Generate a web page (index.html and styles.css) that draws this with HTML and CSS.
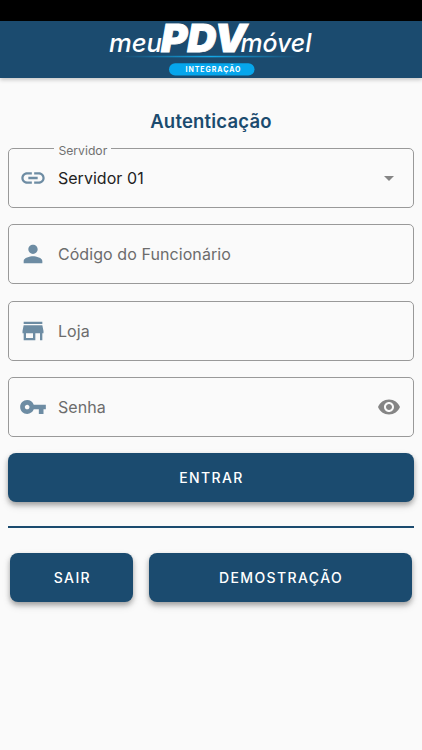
FILE: index.html
```html
<!DOCTYPE html>
<html lang="pt-BR">
<head>
<meta charset="utf-8">
<meta name="viewport" content="width=device-width, initial-scale=1">
<title>meuPDVmóvel</title>
<link rel="stylesheet" href="styles.css">
</head>
<body>
<div class="status-bar"></div>
<header class="app-bar">
  <svg class="logo" width="240" height="57" viewBox="90 21 240 57" role="img" aria-label="meuPDVmóvel">
    <defs>
      <linearGradient id="glow" x1="0" x2="1" y1="0" y2="0">
        <stop offset="0" stop-color="#0ba5e8" stop-opacity="0"/>
        <stop offset=".5" stop-color="#14a9e8"/>
        <stop offset="1" stop-color="#0ba5e8" stop-opacity="0"/>
      </linearGradient>
    </defs>
    <text class="logo-thin" x="109" y="51.8" textLength="53" lengthAdjust="spacingAndGlyphs">meu</text>
    <text class="logo-bold" x="161" y="51.8" textLength="85.500" lengthAdjust="spacingAndGlyphs">PDV</text>
    <text class="logo-thin" x="240.500" y="51.8" textLength="71" lengthAdjust="spacingAndGlyphs">móvel</text>
    <rect x="120" y="55.800" width="180" height="1.500" fill="url(#glow)"/>
    <rect x="169" y="63.200" width="85.500" height="12.300" rx="6.150" fill="#06a6ec"/>
    <text class="logo-tag" x="185.500" y="71.900" textLength="55" lengthAdjust="spacing">INTEGRAÇÃO</text>
  </svg>
</header>
<main class="login">
  <h1 class="title">Autenticação</h1>
  <form class="form">
    <fieldset class="field field-select">
      <legend class="legend"><span class="legend-text">Servidor</span></legend>
      <svg class="icon" viewBox="0 0 24 24"><path d="M3.900 12c0-1.710 1.390-3.100 3.100-3.100h4V7H7c-2.760 0-5 2.240-5 5s2.240 5 5 5h4v-1.900H7c-1.710 0-3.100-1.390-3.100-3.100zM8 13h8v-2H8v2zm9-6h-4v1.900h4c1.710 0 3.100 1.390 3.100 3.100s-1.390 3.100-3.100 3.100h-4V17h4c2.760 0 5-2.240 5-5s-2.240-5-5-5z"/></svg>
      <span class="value">Servidor 01</span>
      <svg class="icon trailing" viewBox="0 0 24 24"><path d="M7 10l5 5 5-5z"/></svg>
    </fieldset>
    <div class="field">
      <svg class="icon" viewBox="0 0 24 24"><path d="M12 12c2.210 0 4-1.790 4-4s-1.790-4-4-4-4 1.790-4 4 1.790 4 4 4zm0 2c-2.670 0-8 1.340-8 4v2h16v-2c0-2.660-5.330-4-8-4z"/></svg>
      <span class="hint">Código do Funcionário</span>
    </div>
    <div class="field">
      <svg class="icon" viewBox="0 0 24 24"><path d="M20 4H4v2h16V4zm1 10v-2l-1-5H4l-1 5v2h1v6h10v-6h4v6h2v-6h1zm-9 4H6v-4h6v4z"/></svg>
      <span class="hint">Loja</span>
    </div>
    <div class="field">
      <svg class="icon" viewBox="0 0 24 24"><path d="M12.650 10C11.830 7.670 9.610 6 7 6c-3.310 0-6 2.690-6 6s2.690 6 6 6c2.610 0 4.830-1.670 5.650-4H17v4h4v-4h2v-4H12.650zM7 14c-1.100 0-2-.9-2-2s.9-2 2-2 2 .9 2 2-.9 2-2 2z"/></svg>
      <span class="hint">Senha</span>
      <svg class="icon trailing" viewBox="0 0 24 24"><path d="M12 4.500C7 4.500 2.730 7.610 1 12c1.730 4.390 6 7.500 11 7.500s9.270-3.110 11-7.500c-1.730-4.390-6-7.500-11-7.500zM12 17c-2.760 0-5-2.240-5-5s2.240-5 5-5 5 2.240 5 5-2.240 5-5 5zm0-8c-1.660 0-3 1.340-3 3s1.340 3 3 3 3-1.340 3-3-1.340-3-3-3z"/></svg>
    </div>
    <button class="btn" type="button">ENTRAR</button>
  </form>
  <hr class="divider">
  <div class="actions">
    <button class="btn" type="button">SAIR</button>
    <button class="btn" type="button">DEMOSTRAÇÃO</button>
  </div>
</main>
</body>
</html>
```

FILE: styles.css
```css
* { box-sizing: border-box; }

body {
  margin: 0;
  min-height: 750px;
  background: #fafafa;
  font-family: Inter, "Liberation Sans", sans-serif;
}

.status-bar { height: 21px; background: #000; }

.app-bar {
  height: 57px;
  padding-left: 90px;
  background: #1b4b6f;
  box-shadow: 0 2px 4px rgba(0, 0, 0, .2);
}

.logo { display: block; overflow: visible; }
.logo text { fill: #fff; font-family: Inter, sans-serif; }
.logo .logo-thin { font-size: 25.500px; font-style: italic; font-weight: 500; }
.logo .logo-bold { font-size: 39px; font-style: italic; font-weight: 900; stroke: #fff; stroke-width: .9px; }
.logo .logo-tag { font-size: 7px; font-weight: 700; }

.login { padding: 31px 8.400px 0; }

.title {
  margin: 0 0 15px;
  color: #1b4b6f;
  font-size: 18.500px;
  font-weight: 600;
  line-height: 24px;
  letter-spacing: .2px;
  text-align: center;
}

.form { display: grid; gap: 16.300px; }

.field {
  display: flex;
  align-items: center;
  height: 60px;
  min-width: 0;
  margin: 0;
  padding: 0 11.500px 0 9.500px;
  border: 1px solid #999;
  border-radius: 5px;
}

.field-select { height: 66px; margin-top: -6px; padding-bottom: 7px; }

.legend {
  margin-left: 35.500px;
  padding: 0 4px;
  color: #717171;
  font-size: 12.200px;
  line-height: 13px;
}

.legend-text { display: block; transform: translateY(1.500px); }

.icon { flex: none; width: 28px; height: 28px; margin-right: 11px; fill: #6d8ca3; }
.trailing { width: 24px; height: 24px; margin: 0 0 0 auto; fill: #858585; }

.value, .hint { font-size: 16px; }
.value { color: #222; letter-spacing: .05px; }
.hint { color: #6c6c6c; letter-spacing: .08px; }

.btn {
  height: 49px;
  padding: 0 0 1px 1px;
  border: 0;
  border-radius: 8px;
  background: #1b4b6f;
  box-shadow: 0 3px 5px rgba(0, 0, 0, .28), 0 4px 9px rgba(0, 0, 0, .12);
  color: #fff;
  font: 500 14px Inter, sans-serif;
  letter-spacing: 1.400px;
}

.divider { height: 2px; margin: 23.500px 0 25.500px; border: 0; background: #1b4b6f; }

.actions {
  display: grid;
  grid-template-columns: 123px 1fr;
  gap: 16px;
  padding: 0 2px;
}
```
